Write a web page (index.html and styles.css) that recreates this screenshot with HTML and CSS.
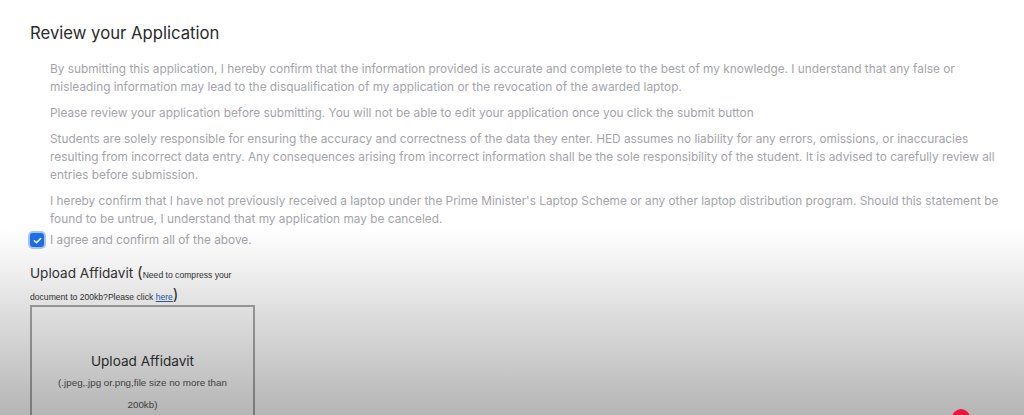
FILE: index.html
```html
<!DOCTYPE html>
<html>
<head>
<meta charset="utf-8">
<link rel="stylesheet" href="styles.css">
</head>
<body>
<div class="page">
  <h2 class="title">Review your Application</h2>
  <div class="terms">
    <p>By submitting this application, I hereby confirm that the information provided is accurate and complete to the best of my knowledge. I understand that any false or misleading information may lead to the disqualification of my application or the revocation of the awarded laptop.</p>
    <p>Please review your application before submitting. You will not be able to edit your application once you click the submit button</p>
    <p>Students are solely responsible for ensuring the accuracy and correctness of the data they enter. HED assumes no liability for any errors, omissions, or inaccuracies resulting from incorrect data entry. Any consequences arising from incorrect information shall be the sole responsibility of the student. It is advised to carefully review all entries before submission.</p>
    <p>I hereby confirm that I have not previously received a laptop under the Prime Minister's Laptop Scheme or any other laptop distribution program. Should this statement be found to be untrue, I understand that my application may be canceled.</p>
  </div>
  <label class="agree">
    <span class="check"><svg viewBox="0 0 16 16" width="11" height="11"><path d="M3.5 8.3l3 3 6-6.3" fill="none" stroke="#fff" stroke-width="2.2" stroke-linecap="round" stroke-linejoin="round"/></svg></span>
    <span>I agree and confirm all of the above.</span>
  </label>
  <div class="upload-head">
    <span class="uh-title">Upload Affidavit </span><span class="paren">(</span><span class="small">Need to compress your document to 200kb?Please click <a href="#">here</a></span><span class="paren">)</span>
  </div>
  <div class="dropbox">
    <div class="db-title">Upload Affidavit</div>
    <div class="db-sub">(.jpeg,.jpg or.png,file size no more than 200kb)</div>
  </div>
</div>
<div class="shade"></div>
<div class="red-dot"></div>
</body>
</html>
```
FILE: styles.css
```css
html, body {
  margin: 0;
  padding: 0;
  background: #fff;
  overflow: hidden;
  height: 415px;
}
body {
  font-family: Inter, "Liberation Sans", sans-serif;
  position: relative;
}
.page {
  padding: 22px 24px 0 30px;
}
.title {
  margin: 0;
  font-size: 16.7px;
  font-weight: 400;
  color: #2b2b2b;
  line-height: 22px;
}
.terms {
  padding: 16px 0 0 20px;
  color: #a4a4aa;
  font-size: 11.85px;
  line-height: 18px;
}
.terms p {
  margin: 0 0 8px 0;
}
.terms p:last-child {
  margin-bottom: 0;
}
.agree {
  display: flex;
  align-items: center;
  gap: 6px;
  color: #a4a4aa;
  font-size: 11.85px;
  line-height: 18px;
  margin-top: 3px;
}
.check {
  width: 14px;
  height: 14px;
  border-radius: 3px;
  background: #1f6fe5;
  display: flex;
  align-items: center;
  justify-content: center;
  box-shadow: 0 0 0 2px rgba(60, 130, 240, 0.45);
}
.upload-head {
  margin-top: 13px;
  width: 222px;
  height: 44px;
  font-size: 13.6px;
  line-height: 22px;
  color: #333;
}
.upload-head span {
  line-height: 1;
}
.paren {
  font-size: 15.5px;
}
.small {
  font-family: "Liberation Sans", Arial, sans-serif;
  font-size: 8.6px;
  color: #333;
}
.small a {
  color: #2a5db0;
}
.dropbox {
  margin-top: -1px;
  width: 225px;
  height: 130px;
  border: 2px solid #a9a9a9;
  display: flex;
  flex-direction: column;
  align-items: center;
  padding-top: 43px;
  box-sizing: border-box;
}
.db-title {
  font-size: 13.6px;
  color: #333;
  line-height: 22px;
}
.db-sub {
  font-family: "Liberation Sans", Arial, sans-serif;
  font-size: 9.8px;
  color: #555;
  line-height: 22px;
  text-align: center;
  width: 190px;
}
.shade {
  position: absolute;
  left: 0;
  right: 0;
  top: 228px;
  height: 187px;
  background: linear-gradient(to bottom, rgba(0,0,0,0) 0%, rgba(0,0,0,0.04) 15%, rgba(0,0,0,0.13) 45%, rgba(0,0,0,0.29) 100%);
  pointer-events: none;
}
.red-dot {
  position: absolute;
  left: 952px;
  top: 409px;
  width: 18px;
  height: 18px;
  border-radius: 50%;
  background: #e8173a;
}
```
